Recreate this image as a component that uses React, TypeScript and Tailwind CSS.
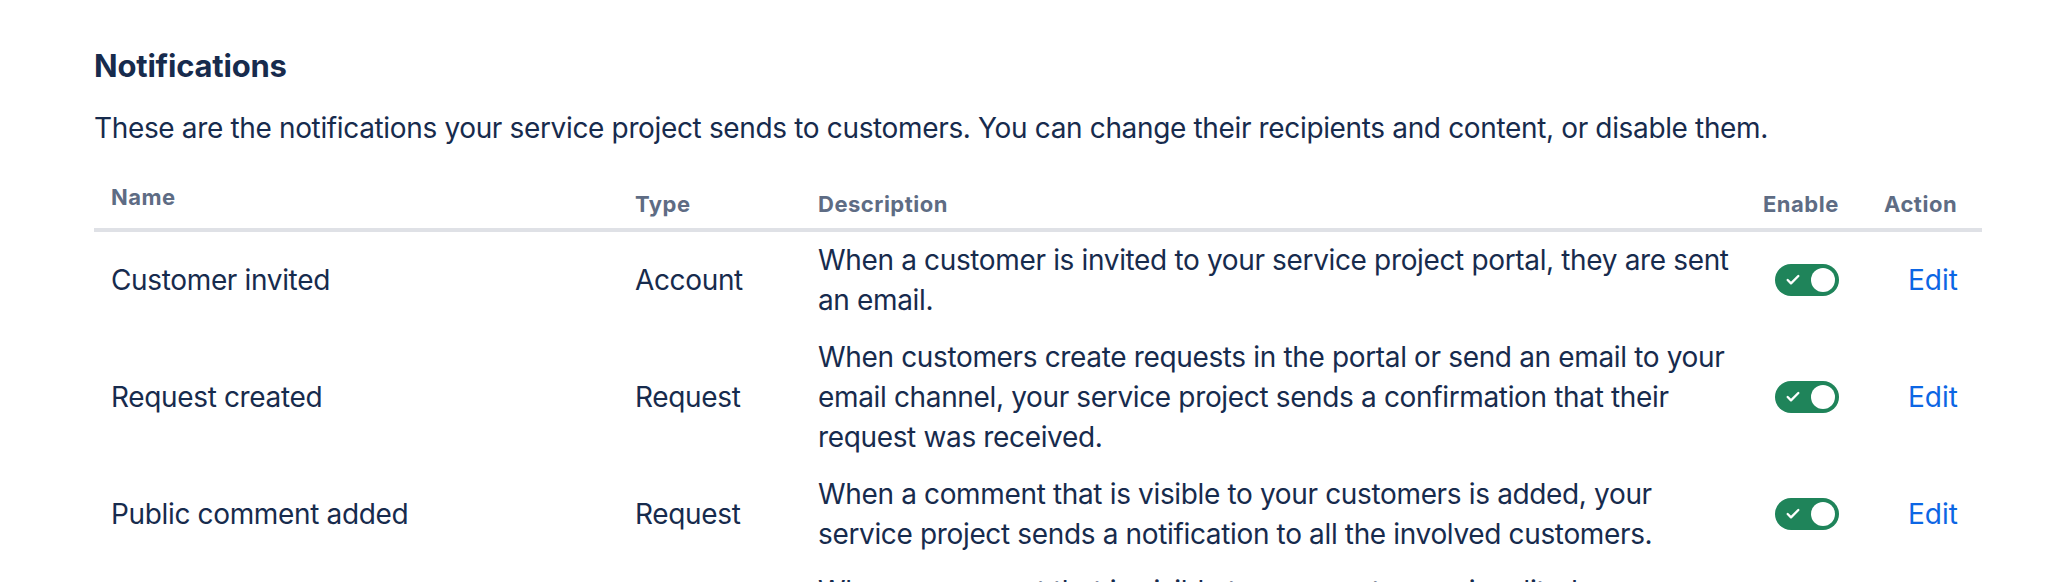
import { Check } from "lucide-react";

type Row = {
  name: string;
  type: string;
  description: string;
};

const rows: Row[] = [
  {
    name: "Customer invited",
    type: "Account",
    description:
      "When a customer is invited to your service project portal, they are sent an email.",
  },
  {
    name: "Request created",
    type: "Request",
    description:
      "When customers create requests in the portal or send an email to your email channel, your service project sends a confirmation that their request was received.",
  },
  {
    name: "Public comment added",
    type: "Request",
    description:
      "When a comment that is visible to your customers is added, your service project sends a notification to all the involved customers.",
  },
  {
    name: "Public comment edited",
    type: "Request",
    description:
      "When a comment that is visible to your customers is edited, your service project sends a notification to all the involved customers.",
  },
];

function Toggle() {
  return (
    <div className="w-[64px] h-[32px] rounded-full bg-[#1f845a] flex items-center justify-between pl-[10px] pr-[4px]">
      <Check className="w-[16px] h-[16px] text-white" strokeWidth={3.5} />
      <div className="w-[24px] h-[24px] rounded-full bg-white" />
    </div>
  );
}

export default function App() {
  return (
    <div
      className="min-h-screen bg-white pl-[94px] pt-[48px] text-[#172b4d] tracking-[-0.35px]"
      style={{ fontFamily: "Inter, 'Liberation Sans', sans-serif" }}
    >
      <h2 className="text-[31px] leading-[36px] font-bold tracking-[-0.2px]">Notifications</h2>
      <p className="mt-[24px] text-[28px] leading-[40px]">
        These are the notifications your service project sends to customers. You can change their recipients and content, or disable them.
      </p>

      <div className="w-[1888px] mt-[24px]">
        <div className="grid grid-cols-[525px_183px_945px_121px_114px] h-[60px] items-end border-b-4 border-[#dfe1e6] text-[22px] leading-[28px] font-bold tracking-[0.5px] text-[#5e6c84]">
          <div className="px-[17px] pb-[17px]">Name</div>
          <div className="px-[16px] pb-[10px]">Type</div>
          <div className="px-[16px] pb-[10px]">Description</div>
          <div className="px-[16px] pb-[10px]">Enable</div>
          <div className="px-[16px] pb-[10px]">Action</div>
        </div>

        {rows.map((row) => (
          <div
            key={row.name}
            className="grid grid-cols-[525px_183px_945px_121px_114px] items-center pt-[8px] pb-[9px] text-[28px] leading-[40px]"
          >
            <div className="px-[17px]">{row.name}</div>
            <div className="px-[16px]">{row.type}</div>
            <div className="pl-[16px] pr-[8px]">{row.description}</div>
            <div className="pl-[28px]">
              <Toggle />
            </div>
            <div className="pl-[40px]">
              <a href="#" className="text-[#0c66e4] tracking-normal">
                Edit
              </a>
            </div>
          </div>
        ))}
      </div>
    </div>
  );
}
